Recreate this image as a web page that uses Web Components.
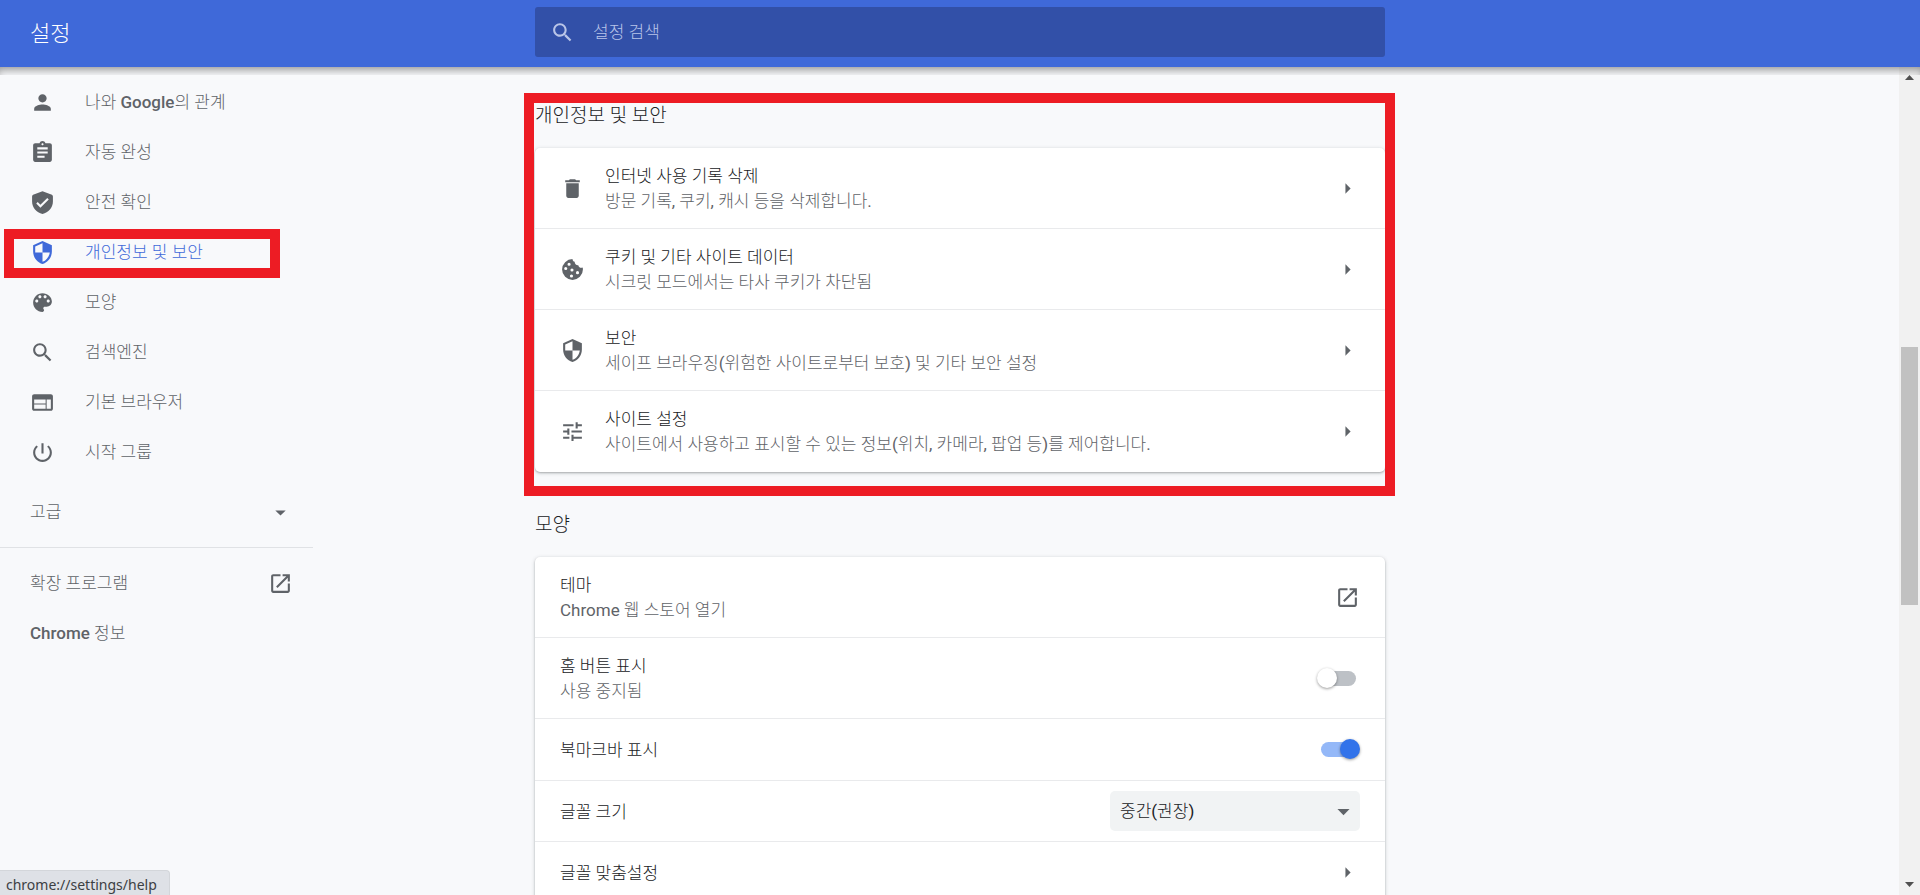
<!DOCTYPE html>
<html lang="ko">
<head>
<meta charset="utf-8">
<title>설정</title>
<style>
  html, body { margin: 0; height: 100%; }
  body {
    overflow: hidden;
    background: #f8f9fb;
    color: #202124;
    font-family: Roboto, "Noto Sans CJK KR Light", "Noto Sans CJK KR DemiLight", "Noto Sans CJK KR", sans-serif;
    font-size: 17px;
    line-height: 25px;
  }
</style>
</head>
<body>
<settings-page></settings-page>

<script>
const ICONS = {
  person: 'M12 12c2.21 0 4-1.79 4-4s-1.79-4-4-4-4 1.79-4 4 1.79 4 4 4zm0 2c-2.67 0-8 1.34-8 4v2h16v-2c0-2.66-5.33-4-8-4z',
  assignment: 'M19 3h-4.18C14.4 1.84 13.3 1 12 1c-1.3 0-2.4.84-2.82 2H5c-1.1 0-2 .9-2 2v14c0 1.1.9 2 2 2h14c1.1 0 2-.9 2-2V5c0-1.1-.9-2-2-2zm-7 0c.55 0 1 .45 1 1s-.45 1-1 1-1-.45-1-1 .45-1 1-1zm2 14H7v-2h7v2zm3-4H7v-2h10v2zm0-4H7V7h10v2z',
  verified: 'M12 1.2L3.6 4.3C2.7 4.6 2 5.300 2 6.300V11c0 5.800 4.200 10.600 10 12 5.800-1.400 10-6.200 10-12V6.300c0-1-.7-1.700-1.600-2zM10 17l-4-4 1.410-1.410L10 14.170l6.590-6.590L18 9z',
  security: 'M12 1L3 5v6c0 5.550 3.840 10.740 9 12 5.160-1.260 9-6.450 9-12V5l-9-4zm0 10.990h7c-.53 4.120-3.280 7.790-7 8.940V12H5V6.300l7-3.110v8.800z',
  palette: 'M12 3c-4.970 0-9 4.030-9 9s4.030 9 9 9c.83 0 1.500-.67 1.500-1.500 0-.39-.15-.74-.39-1.010-.23-.26-.38-.61-.38-.99 0-.83.67-1.500 1.500-1.500H16c2.760 0 5-2.240 5-5 0-4.420-4.030-8-9-8zm-5.500 9c-.83 0-1.500-.67-1.500-1.500S5.670 9 6.500 9 8 9.670 8 10.500 7.330 12 6.500 12zm3-4C8.670 8 8 7.330 8 6.500S8.670 5 9.500 5s1.500.67 1.500 1.500S10.330 8 9.500 8zm5 0c-.83 0-1.500-.67-1.500-1.500S13.670 5 14.500 5s1.500.67 1.500 1.500S15.330 8 14.500 8zm3 4c-.83 0-1.500-.67-1.500-1.500S16.670 9 17.500 9s1.500.67 1.500 1.500-.67 1.500-1.500 1.500z',
  search: 'M15.500 14h-.79l-.28-.27C15.410 12.590 16 11.110 16 9.500 16 5.910 13.090 3 9.500 3S3 5.910 3 9.500 5.910 16 9.500 16c1.610 0 3.090-.59 4.230-1.570l.27.28v.79l5 4.990L20.490 19l-4.990-5zm-6 0C7.010 14 5 11.990 5 9.500S7.010 5 9.500 5 14 7.010 14 9.500 11.990 14 9.500 14z',
  web: 'M20 4H4c-1.100 0-1.990.9-1.990 2L2 18c0 1.100.9 2 2 2h16c1.100 0 2-.9 2-2V6c0-1.100-.9-2-2-2zm-5 14H4v-4h11v4zm0-5H4V9h11v4zm5 5h-4V9h4v9z',
  power: 'M13 3h-2v10h2V3zm4.830 2.170l-1.420 1.420C17.990 7.860 19 9.810 19 12c0 3.870-3.130 7-7 7s-7-3.130-7-7c0-2.190 1.010-4.140 2.580-5.420L6.170 5.170C4.230 6.820 3 9.260 3 12c0 4.970 4.030 9 9 9s9-4.030 9-9c0-2.740-1.230-5.180-3.170-6.830z',
  trash: 'M6 19c0 1.100.9 2 2 2h8c1.100 0 2-.9 2-2V7H6v12zM19 4h-3.500l-1-1h-5l-1 1H5v2h14V4z',
  cookie: 'M12 2a10 10 0 1 0 10 10c0-.7-.1-1.300-.2-2-.4.300-.9.400-1.400.4-1.500 0-2.700-1.100-2.800-2.500-2 .2-3.700-1.400-3.500-3.300C12.700 4.500 12 3.400 12 2zM8.700 5.500a1.500 1.500 0 1 1 0 3 1.500 1.500 0 0 1 0-3zM5.500 9.500a1.500 1.500 0 1 1 0 3 1.500 1.500 0 0 1 0-3zM11.500 11a1.500 1.500 0 1 1 0 3 1.500 1.500 0 0 1 0-3zM16.800 13.500a1.500 1.500 0 1 1 0 3 1.500 1.500 0 0 1 0-3zM11 16.800a1.500 1.500 0 1 1 0 3 1.500 1.500 0 0 1 0-3z',
  tune: 'M3 17v2h6v-2H3zM3 5v2h10V5H3zm10 16v-2h8v-2h-8v-2h-2v6h2zM7 9v2H3v2h4v2h2V9H7zm14 4v-2H11v2h10zm-6-4h2V7h4V5h-4V3h-2v6z',
  open: 'M19 19H5V5h7V3H5c-1.110 0-2 .9-2 2v14c0 1.100.89 2 2 2h14c1.100 0 2-.9 2-2v-7h-2v7zM14 3v2h3.590l-9.830 9.830 1.410 1.410L19 6.410V10h2V3h-7z',
  right: 'M10 7l5 5-5 5z',
  down: 'M7 10l5 5 5-5z'
};

function define(name, render) {
  customElements.define(name, class extends HTMLElement {
    constructor() {
      super();
      this.attachShadow({ mode: 'open' });
    }
    connectedCallback() {
      this.shadowRoot.innerHTML = render(this);
    }
  });
}

define('settings-icon', el => `
  <style>
    :host { display: block; flex: none; width: 25px; height: 25px; }
    svg { display: block; width: 100%; height: 100%; fill: currentColor; }
  </style>
  <svg viewBox="0 0 24 24" aria-hidden="true"><path fill-rule="evenodd" d="${ICONS[el.getAttribute('name')]}"/></svg>`);

define('settings-toolbar', () => `
  <style>
    :host {
      display: grid; grid-template-columns: minmax(0, 1fr) minmax(0, 850px) minmax(0, 1fr);
      box-sizing: border-box; height: 67px; padding-bottom: 3px; align-items: center;
      background: #3f69d9; color: #fff;
    }
    h1 { margin: 0; padding: 4px 0 0 30px; font-size: 22px; line-height: 30px; font-weight: 400; }
    label {
      display: flex; align-items: center; gap: 18px; height: 50px; padding: 0 15px;
      background: #3250a8; border-radius: 3px; color: #b9c5e8;
    }
    input {
      flex: 1; min-width: 0; padding: 0; border: 0; outline: 0; background: none;
      color: inherit; font: inherit;
    }
    input::placeholder { color: #b9c5e8; opacity: 1; }
  </style>
  <h1>설정</h1>
  <label><settings-icon name="search"></settings-icon><input type="search" placeholder="설정 검색" aria-label="설정 검색"></label>`);

define('nav-item', el => `
  <style>
    :host { display: block; position: relative; color: #5f6368; }
    :host([selected]) { color: #3f69d9; }
    a {
      display: flex; align-items: center; gap: 30px; height: 50px; padding: 0 20px 0 30px;
      color: inherit; text-decoration: none;
    }
    .label { flex: 1; }
    .mark { position: absolute; inset: 2px 33px -1px 4px; border: 10px solid #ed1c24; }
  </style>
  <a href="#">
    ${el.hasAttribute('icon') ? `<settings-icon name="${el.getAttribute('icon')}"></settings-icon>` : ''}
    <span class="label"><slot></slot></span>
    ${el.hasAttribute('end') ? `<settings-icon name="${el.getAttribute('end')}"></settings-icon>` : ''}
  </a>
  ${el.hasAttribute('selected') ? '<div class="mark"></div>' : ''}`);

define('settings-menu', () => `
  <style>
    :host { display: block; max-width: 313px; padding-top: 10px; }
    hr { margin: 10px 0; border: 0; border-top: 1px solid #e0e2e5; }
    .advanced { margin-top: 10px; }
    b { font-weight: 500; }
  </style>
  <nav>
    <nav-item icon="person">나와 <b>Google</b>의 관계</nav-item>
    <nav-item icon="assignment">자동 완성</nav-item>
    <nav-item icon="verified">안전 확인</nav-item>
    <nav-item icon="security" selected>개인정보 및 보안</nav-item>
    <nav-item icon="palette">모양</nav-item>
    <nav-item icon="search">검색엔진</nav-item>
    <nav-item icon="web">기본 브라우저</nav-item>
    <nav-item icon="power">시작 그룹</nav-item>
    <nav-item class="advanced" end="down">고급</nav-item>
    <hr>
    <nav-item end="open">확장 프로그램</nav-item>
    <nav-item><b>Chrome</b> 정보</nav-item>
  </nav>`);

define('settings-section', el => `
  <style>
    :host { display: block; position: relative; margin-bottom: 38px; }
    h2 { margin: 0 0 17px; font-size: 19px; line-height: 30px; font-weight: 400; }
    .card {
      background: #fff; border-radius: 5px;
      box-shadow: 0 1px 2px rgba(60, 64, 67, .3), 0 1px 4px rgba(60, 64, 67, .2);
    }
    .mark { position: absolute; inset: -8px -10px -24px -11px; border: 10px solid #ed1c24; }
  </style>
  <h2>${el.getAttribute('heading')}</h2>
  <div class="card"><slot></slot></div>
  ${el.hasAttribute('marked') ? '<div class="mark"></div>' : ''}`);

const ROW_STYLE = `
  :host { display: block; border-bottom: 1px solid #e9eaec; }
  :host(:last-child) { border-bottom-color: transparent; }
  .row {
    display: flex; align-items: center; gap: 20px; box-sizing: border-box;
    width: 100%; min-height: 60px; padding: 0 25px; border: 0; background: none;
    color: #5f6368; font: inherit; text-align: left;
  }
  .two { min-height: 80px; }
  .text { flex: 1; padding-top: 2px; }
  .title, .sub { display: block; }
  .title { color: #202124; }`;

const rowText = el => `
  <span class="text">
    <span class="title">${el.getAttribute('heading')}</span>
    ${el.hasAttribute('sub') ? `<span class="sub">${el.getAttribute('sub')}</span>` : ''}
  </span>`;

const rowClass = el => el.hasAttribute('sub') ? 'row two' : 'row';

define('link-row', el => `
  <style>${ROW_STYLE}</style>
  <button type="button" class="${rowClass(el)}">
    ${el.hasAttribute('icon') ? `<settings-icon name="${el.getAttribute('icon')}"></settings-icon>` : ''}
    ${rowText(el)}
    <settings-icon name="${el.getAttribute('end') || 'right'}"></settings-icon>
  </button>`);

define('toggle-row', el => `
  <style>
    ${ROW_STYLE}
    .row { min-height: 61px; }
    .two { min-height: 80px; }
    input {
      appearance: none; position: relative; flex: none; width: 35px; height: 15px; margin: 0 4px;
      border-radius: 8px; background: #bdc1c6;
    }
    input::before {
      content: ""; position: absolute; top: -3px; left: -4px; width: 20px; height: 20px;
      border-radius: 50%; background: #fff; box-shadow: 0 1px 3px rgba(0, 0, 0, .4);
    }
    input:checked { background: #94b8f8; }
    input:checked::before { left: auto; right: -4px; background: #3273ea; }
  </style>
  <label class="${rowClass(el)}">
    ${rowText(el)}
    <input type="checkbox"${el.hasAttribute('on') ? ' checked' : ''}>
  </label>`);

define('select-row', el => `
  <style>
    ${ROW_STYLE}
    .box { display: grid; flex: 0 1 250px; align-items: center; position: relative; }
    select {
      appearance: none; width: 100%; height: 40px; padding: 0 40px 0 10px; border: 0;
      border-radius: 5px; background: #f1f3f4; color: #202124; font: inherit;
    }
    settings-icon { position: absolute; right: 2px; width: 29px; height: 29px; color: #5f6368; pointer-events: none; }
  </style>
  <label class="row">
    ${rowText(el)}
    <span class="box">
      <select><option>${el.getAttribute('value')}</option></select>
      <settings-icon name="down"></settings-icon>
    </span>
  </label>`);

define('page-scrollbar', () => `
  <style>
    :host { display: flex; flex-direction: column; width: 21px; background: #f1f1f1; color: #505050; }
    .button { display: grid; place-items: center; height: 21px; }
    svg { display: block; width: 9px; height: 5px; fill: currentColor; }
    .before { flex: 259; }
    .thumb { flex: 258; margin: 0 2px; background: #c1c1c1; }
    .after { flex: 269; }
  </style>
  <div class="button"><svg viewBox="0 0 9 5"><path d="M0 5L4.500 0 9 5z"/></svg></div>
  <div class="before"></div>
  <div class="thumb"></div>
  <div class="after"></div>
  <div class="button"><svg viewBox="0 0 9 5"><path d="M0 0L4.500 5 9 0z"/></svg></div>`);

define('status-bubble', () => `
  <style>
    :host {
      position: absolute; left: 0; bottom: 0; box-sizing: border-box; height: 25px; padding: 0 12px 0 6px;
      border: 1px solid #d3d6da; border-width: 1px 1px 0 0; border-radius: 0 4px 0 0;
      background: #dee1e6; color: #3c4043;
      font-family: "Noto Sans", sans-serif; font-size: 14px; line-height: 27px;
    }
  </style>
  <slot></slot>`);

define('settings-page', () => `
  <style>
    :host { display: flex; flex-direction: column; position: relative; height: 100vh; overflow: hidden; }
    .body {
      flex: 1; min-height: 0; position: relative; display: grid;
      grid-template-columns: minmax(0, 1fr) minmax(0, 850px) minmax(0, 1fr);
      grid-template-rows: minmax(0, 1fr);
    }
    .shadow {
      position: absolute; inset: 0 0 auto; height: 8px; pointer-events: none;
      box-shadow: inset 0 6px 8px -3px rgba(0, 0, 0, .4);
    }
    main { padding-top: 34px; }
    page-scrollbar { justify-self: end; }
  </style>
  <settings-toolbar></settings-toolbar>
  <div class="body">
    <settings-menu></settings-menu>
    <main>
      <settings-section heading="개인정보 및 보안" marked>
        <link-row icon="trash" heading="인터넷 사용 기록 삭제" sub="방문 기록, 쿠키, 캐시 등을 삭제합니다."></link-row>
        <link-row icon="cookie" heading="쿠키 및 기타 사이트 데이터" sub="시크릿 모드에서는 타사 쿠키가 차단됨"></link-row>
        <link-row icon="security" heading="보안" sub="세이프 브라우징(위험한 사이트로부터 보호) 및 기타 보안 설정"></link-row>
        <link-row icon="tune" heading="사이트 설정" sub="사이트에서 사용하고 표시할 수 있는 정보(위치, 카메라, 팝업 등)를 제어합니다."></link-row>
      </settings-section>
      <settings-section heading="모양">
        <link-row heading="테마" sub="Chrome 웹 스토어 열기" end="open"></link-row>
        <toggle-row heading="홈 버튼 표시" sub="사용 중지됨"></toggle-row>
        <toggle-row heading="북마크바 표시" on></toggle-row>
        <select-row heading="글꼴 크기" value="중간(권장)"></select-row>
        <link-row heading="글꼴 맞춤설정"></link-row>
      </settings-section>
    </main>
    <page-scrollbar></page-scrollbar>
    <div class="shadow"></div>
  </div>
  <status-bubble>chrome://settings/help</status-bubble>`);
</script>
</body>
</html>
